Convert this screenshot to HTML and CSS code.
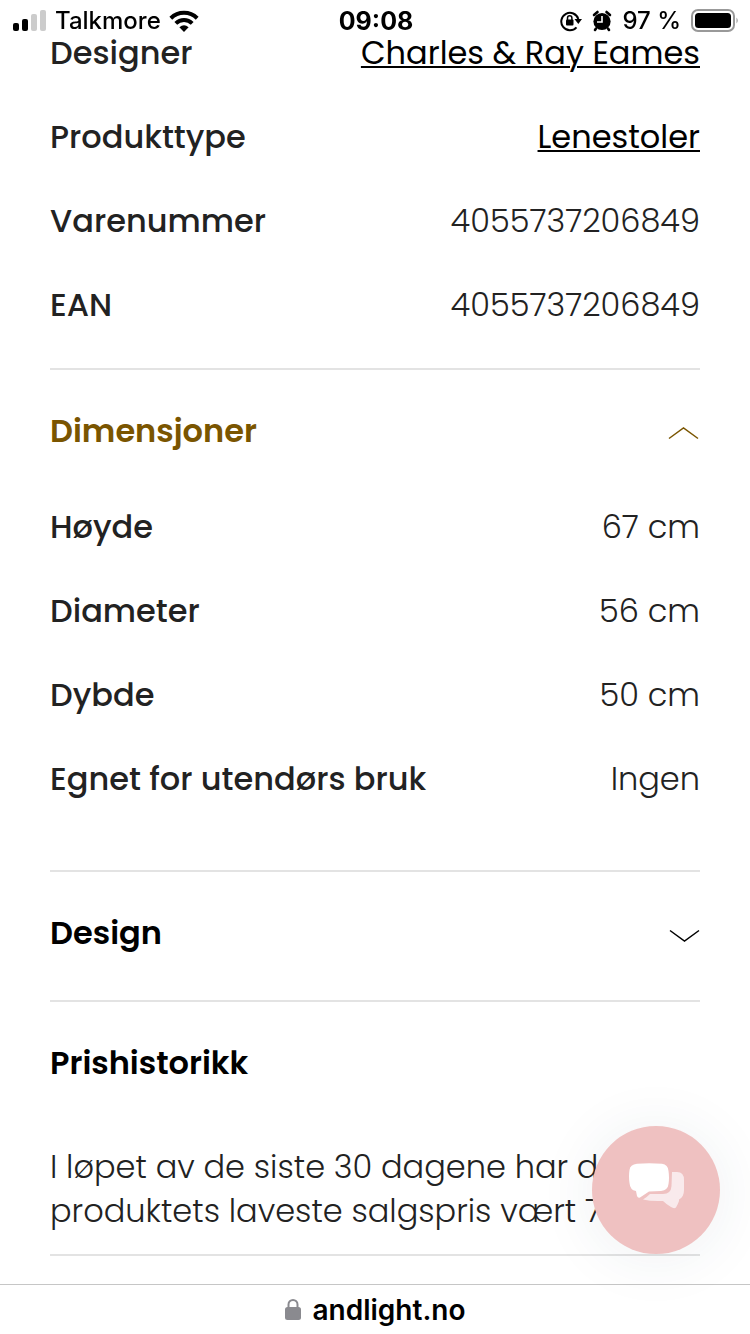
FILE: index.html
```html
<!DOCTYPE html>
<html lang="no">
<head>
<meta charset="utf-8">
<meta name="viewport" content="width=device-width, initial-scale=1">
<title>andlight.no</title>
<link rel="stylesheet" href="styles.css">
</head>
<body>
<header class="status">
  <div class="status-side">
    <svg class="signal" width="34" height="22" viewBox="0 0 34 22" aria-hidden="true">
      <rect x="0" y="13" width="6" height="8" rx="2"/><rect x="9" y="9" width="6" height="12" rx="2"/>
      <rect x="18" y="4" width="6" height="17" rx="2" fill="#ccc"/><rect x="27" y="0" width="6" height="21" rx="2" fill="#ccc"/>
    </svg>
    <span class="carrier">Talkmore</span>
    <svg width="30" height="22" viewBox="0 0 30 22" aria-hidden="true">
      <g fill="none" stroke="#000" stroke-width="4"><path d="M1.800 8.200A19 19 0 0 1 28.200 8.200"/><path d="M6.800 13.400A11.800 11.800 0 0 1 23.200 13.400"/></g>
      <path d="M10.400 17.200Q15 13.200 19.600 17.200L15 22Z"/>
    </svg>
  </div>
  <time class="clock">09:08</time>
  <div class="status-side status-end">
    <svg width="22" height="22" viewBox="0 0 22 22" aria-hidden="true">
      <path d="M16.500 17.300A8.700 8.700 0 1 1 18.300 9" fill="none" stroke="#000" stroke-width="2"/>
      <path d="M14.500 9H22L18.300 14Z"/>
      <rect x="6" y="9.500" width="7.500" height="6" rx="1"/>
      <path d="M7.500 10V8a2.200 2.200 0 0 1 4.400 0v2" fill="none" stroke="#000" stroke-width="1.500"/>
    </svg>
    <svg width="20" height="22" viewBox="0 0 20 22" aria-hidden="true">
      <circle cx="10" cy="11.500" r="8.600"/>
      <path d="M2 5L5.500 2M14.500 2L18 5M4 18.500L3 20M16 18.500l1 1.500" stroke="#000" stroke-width="2.600" stroke-linecap="round"/>
      <path d="M10 6v6H5" fill="none" stroke="#fff" stroke-width="1.600"/>
    </svg>
    <span class="percent">97 %</span>
    <svg width="48" height="24" viewBox="0 0 48 24" aria-hidden="true">
      <rect x="1" y="1" width="42" height="21" rx="6" fill="none" stroke="#999" stroke-width="2"/>
      <rect x="4" y="4" width="36" height="15" rx="3.500"/>
      <path d="M45.500 8.500q2.500 3 0 6z" fill="#999"/>
    </svg>
  </div>
</header>

<main class="page">
  <section class="group group-first">
    <dl class="specs">
      <div class="row"><dt>Designer</dt><dd><a href="#">Charles &amp; Ray Eames</a></dd></div>
      <div class="row"><dt>Produkttype</dt><dd><a href="#">Lenestoler</a></dd></div>
      <div class="row"><dt>Varenummer</dt><dd>4055737206849</dd></div>
      <div class="row"><dt>EAN</dt><dd>4055737206849</dd></div>
    </dl>
  </section>
  <section class="group group-open">
    <h2><button class="toggle" type="button" aria-expanded="true">Dimensjoner
      <svg width="32" height="18" viewBox="0 0 32 18" aria-hidden="true"><path d="M1 16.500L15.500 6L30 16.500"/></svg></button></h2>
    <dl class="specs">
      <div class="row"><dt>Høyde</dt><dd>67 cm</dd></div>
      <div class="row"><dt>Diameter</dt><dd>56 cm</dd></div>
      <div class="row"><dt>Dybde</dt><dd>50 cm</dd></div>
      <div class="row"><dt>Egnet for utendørs bruk</dt><dd>Ingen</dd></div>
    </dl>
  </section>
  <section class="group group-closed">
    <h2><button class="toggle" type="button" aria-expanded="false">Design
      <svg width="32" height="18" viewBox="0 0 32 18" aria-hidden="true"><path d="M2 6.500L16.500 17L31 6.500"/></svg></button></h2>
  </section>
  <section class="group history">
    <h2>Prishistorikk</h2>
    <p>I løpet av de siste 30 dagene har dette<br>produktets laveste salgspris vært 7</p>
  </section>
</main>

<button class="chat" type="button" aria-label="Chat">
  <svg width="56" height="46" viewBox="0 0 56 46" aria-hidden="true">
    <path fill="#f9eaec" d="M43 9H48Q55 9 55 17V27Q55 34 50 36.500V38Q49 41 47 44.500Q45 46 42 44Q37 41 34 38Q22 38.500 14 36.500Q18 34 21 31H34Q42 31 42.500 23Z"/>
    <path fill="#fff" d="M8 0.800Q20-.5 33 .8Q39 1.500 39.500 8Q40.500 15 39.500 21Q39 27 32 28L20 28.500L11 34.500Q9 35.500 8 33L7 28Q1 27 .5 20Q-.5 13 .5 7Q1 1.500 8 .8Z"/>
  </svg>
</button>

<footer class="address">
  <svg width="16" height="23" viewBox="0 0 16 23" aria-hidden="true">
    <rect x="0" y="9" width="16" height="13" rx="2.500" fill="#8a8a8f"/>
    <path d="M3.500 10V6.500a4.500 4.500 0 0 1 9 0V10" fill="none" stroke="#8a8a8f" stroke-width="2"/>
  </svg>
  <span>andlight.no</span>
</footer>
</body>
</html>
```
FILE: styles.css
```css
* { box-sizing: border-box; }
body {
  margin: 0;
  min-height: 100vh;
  display: flex;
  flex-direction: column;
  background: #fff;
  color: #222;
  font-family: Poppins, Inter, "Liberation Sans", sans-serif;
  font-size: 32px;
  line-height: 42px;
}
h2, p, dl, dd { margin: 0; }
h2 { font-size: 32px; font-weight: 600; color: #000; }
.status {
  position: fixed;
  top: 0;
  left: 0;
  right: 0;
  height: 40px;
  padding: 0 11px 0 13px;
  display: grid;
  grid-template-columns: 1fr auto 1fr;
  align-items: center;
  color: #000;
  font-family: Inter, "Liberation Sans", sans-serif;
  font-size: 24px;
  font-weight: 500;
  line-height: 42px;
}
.status-side { display: flex; align-items: center; gap: 8px; }
.status-end { justify-content: flex-end; gap: 10px; }
.clock { font-size: 25px; font-weight: 700; }
.page { flex: 1; padding: 11px 50px 28px; }
.group { border-bottom: 2px solid #e3e3e3; }
.group-first { padding-bottom: 21px; }
.row {
  display: flex;
  justify-content: space-between;
  align-items: center;
  min-height: 84px;
}
.row dt { font-weight: 500; }
.row dd { font-weight: 300; }
.row a {
  color: #000;
  font-weight: 400;
  text-decoration-thickness: 2px;
  text-underline-offset: 2px;
}
.toggle {
  display: flex;
  justify-content: space-between;
  align-items: center;
  width: 100%;
  padding: 0;
  border: 0;
  background: none;
  color: inherit;
  font: inherit;
  text-align: left;
}
.toggle svg { fill: none; stroke: currentColor; stroke-width: 1.5; }
.group-open { padding: 40px 0 49px; }
.group-open h2 { color: #7a5500; padding-bottom: 33px; }
.group-closed { padding: 40px 0 46px; }
.history { padding: 40px 0 21px; }
.history p { padding-top: 61px; font-weight: 300; line-height: 44px; }
.chat {
  position: fixed;
  right: 30px;
  bottom: 80px;
  width: 128px;
  height: 128px;
  display: grid;
  place-items: center;
  padding: 0 0 8px 2px;
  border: 0;
  border-radius: 50%;
  background: #efc1c1;
  box-shadow: 0 4px 60px rgba(40, 70, 90, 0.08);
}
.address {
  display: flex;
  justify-content: center;
  align-items: center;
  gap: 12px;
  height: 50px;
  border-top: 1px solid #c6c6c6;
  background: #fff;
  color: #000;
  font-family: Inter, "Liberation Sans", sans-serif;
  font-size: 28px;
  font-weight: 600;
}
```
